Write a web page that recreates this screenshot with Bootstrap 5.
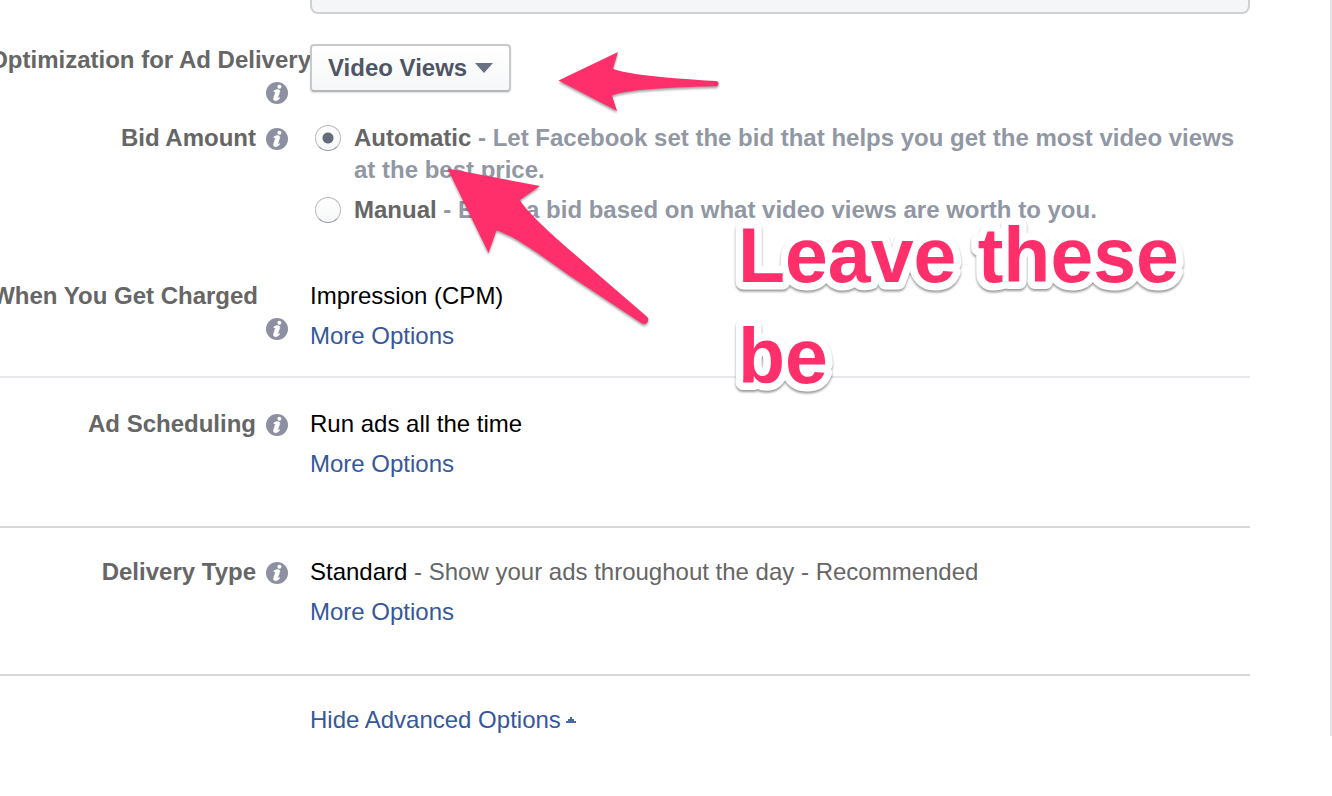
<!DOCTYPE html>
<html lang="en">
<head>
<meta charset="utf-8">
<meta name="viewport" content="width=device-width, initial-scale=1">
<title>Ad delivery options</title>
<link href="https://cdn.jsdelivr.net/npm/bootstrap@5.3.0/dist/css/bootstrap.min.css" rel="stylesheet">
<script src="https://cdn.jsdelivr.net/npm/bootstrap@5.3.0/dist/js/bootstrap.bundle.min.js" defer></script>
<style>
body{font-family:"Liberation Sans",Arial,sans-serif;font-size:24px;line-height:32px;color:#000;background:#fff;overflow-x:hidden}
a{color:#365899;text-decoration:none}
a:hover{text-decoration:underline}
.panel{border-right:2px solid #e4e4e6;padding-right:80px}
.label-col{width:310px;padding-right:22px;color:#666;font-weight:700;white-space:nowrap}
.info-icon{width:22px;height:22px;flex:none;display:block;margin-top:6px}
.label-line{display:flex;justify-content:flex-end;gap:10px}
.label-stack{display:flex;flex-direction:column;align-items:flex-end}
.label-stack .info-icon{margin-bottom:4px}
.label-over{margin-right:-23px}
.label-in{margin-right:30px}
.box-end{height:14px;margin-left:310px;background:#f5f6f8;border:2px solid #d0d1d5;border-top:0;border-radius:0 0 8px 8px}
.row-goal{padding-top:30px}
.row-bid{padding-top:14px}
.row-charge{padding:54px 0 24px}
.row-more{padding:30px 0 46px}
.row-type{padding:28px 0 46px}
.row-hide{padding:28px 0 0 310px}
.value-col{display:grid;gap:8px;flex:1 1 0;min-width:0}
.btn-pick{height:48px;width:201px;border:2px solid #c8c9cb;border-bottom-color:#b4b6b9;border-radius:4px;background:linear-gradient(#fff,#f6f7f8);color:#4e5665;font-weight:700;padding:0 16px;box-shadow:0 1px 2px rgba(0,0,0,.12)}
.option{display:grid;grid-template-columns:26px 1fr;column-gap:13px;padding-left:5px;color:#9197a3;font-weight:700}
.option input{appearance:none;width:26px;height:26px;margin:3px 0 0;border:1px solid #bbb;border-bottom-color:#999;border-radius:50%;background:linear-gradient(#fff,#f6f7f8)}
.option input:checked{background:radial-gradient(circle,#646b7c 5px,transparent 6px),linear-gradient(#fff,#f6f7f8)}
.option b{color:#666}
.rule-light{border-bottom:2px solid #e7e8ec}
.rule-dark{border-bottom:2px solid #d8d8d8}
.muted-text{color:#666}
.arrow{position:absolute;overflow:visible;fill:#ff2f6c;filter:drop-shadow(0 2px 1px rgba(0,0,0,.35));pointer-events:none}
.arrow-goal{left:558px;top:52px}
.arrow-bid{left:447px;top:168px}
.note{position:absolute;left:730px;top:210px;overflow:visible;font-size:77px;font-weight:700;fill:#ff2f6c;stroke:#fff;stroke-width:15px;stroke-linejoin:round;paint-order:stroke fill;filter:drop-shadow(0 2px 1px rgba(0,0,0,.4));pointer-events:none}
</style>
</head>
<body>
<svg width="0" height="0" class="position-absolute" aria-hidden="true"><symbol id="info" viewBox="0 0 22 22"><circle cx="11" cy="11" r="11" fill="#8c90a0"/><circle cx="13.400" cy="4.800" r="2" fill="#fff"/><path fill="#fff" stroke="#fff" stroke-width=".5" d="M7.700 9.100c1.200-1 2.400-1.500 4-1.500 1.900 0 2.500.9 2 2.500l-1.900 5.600c-.3.9.3.8 1.500-.3l.6.6c-1.400 1.900-2.800 2.700-4.300 2.700-1.800 0-2.500-1-2-2.700l1.800-5.700c.2-.8-.3-.8-1.300-.4z"/></symbol></svg>
<main class="panel position-relative">
  <div class="box-end"></div>

  <section class="row-goal d-flex">
    <div class="label-col label-stack flex-shrink-0">
      <label for="goal" class="label-over">Optimization for Ad Delivery</label>
      <svg class="info-icon"><use href="#info"/></svg>
    </div>
    <div><button id="goal" class="btn-pick d-flex align-items-center justify-content-between" type="button">Video Views <svg width="18" height="10" aria-hidden="true"><path d="M0 0H18L9 10z" fill="#697084"/></svg></button></div>
  </section>

  <section class="row-bid d-flex">
    <div class="label-col flex-shrink-0"><div class="label-line"><span>Bid Amount</span><svg class="info-icon"><use href="#info"/></svg></div></div>
    <div class="value-col">
      <div class="option"><input type="radio" name="bid" id="auto" checked><label for="auto"><b>Automatic</b> - Let Facebook set the bid that helps you get the most video views at the best price.</label></div>
      <div class="option"><input type="radio" name="bid" id="manual"><label for="manual"><b>Manual</b> - Enter a bid based on what video views are worth to you.</label></div>
    </div>
  </section>

  <section class="row-charge rule-light d-flex">
    <div class="label-col label-stack flex-shrink-0"><span class="label-in">When You Get Charged</span><svg class="info-icon"><use href="#info"/></svg></div>
    <div class="value-col"><span>Impression (CPM)</span><div><a href="#">More Options</a></div></div>
  </section>

  <section class="row-more rule-dark d-flex">
    <div class="label-col flex-shrink-0"><div class="label-line"><span>Ad Scheduling</span><svg class="info-icon"><use href="#info"/></svg></div></div>
    <div class="value-col"><span>Run ads all the time</span><div><a href="#">More Options</a></div></div>
  </section>

  <section class="row-type rule-dark d-flex">
    <div class="label-col flex-shrink-0"><div class="label-line"><span>Delivery Type</span><svg class="info-icon"><use href="#info"/></svg></div></div>
    <div class="value-col"><div>Standard <span class="muted-text">- Show your ads throughout the day - Recommended</span></div><div><a href="#">More Options</a></div></div>
  </section>

  <div class="row-hide d-flex"><a href="#" class="d-flex align-items-center gap-1">Hide Advanced Options<svg width="11" height="6" aria-hidden="true" shape-rendering="crispEdges"><path d="M5 0h2v2h2v2h2v2H1V4h2V2h2z" fill="#4a68a5"/></svg></a></div>

  <svg class="arrow arrow-goal" width="161" height="60" viewBox="558 52 161 60" aria-hidden="true"><path d="M558.500 80.500 618 52 613 68.700Q630 76 716 81a2.500 2.500 0 0 1 0 5.200Q628 88 612 95.500L617 111z"/></svg>
  <svg class="arrow arrow-bid" width="202" height="157" viewBox="447 168 202 157" aria-hidden="true"><path d="M447.500 168.500 540 186 520 200C526 211 552 235 572 252L646.500 316.200A4.300 4.300 0 0 1 641.500 323.200L570 276C543 257 515 236 496.500 230.500L488.500 253z"/></svg>
  <svg class="note" width="460" height="190"><text x="8" y="72">Leave these</text><text x="8" y="173">be</text></svg>
</main>
</body>
</html>
